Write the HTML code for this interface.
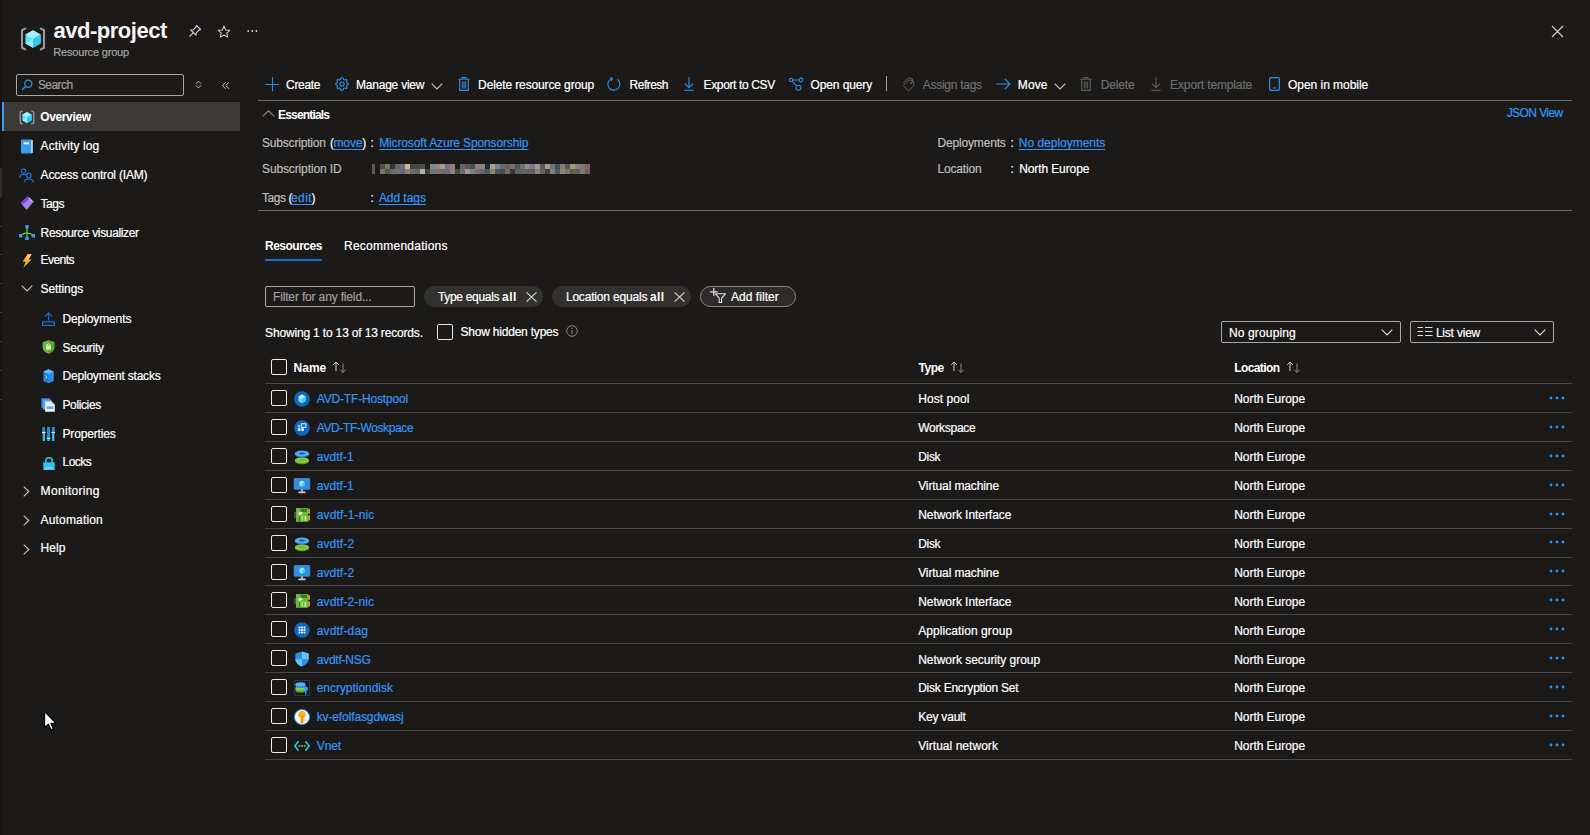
<!DOCTYPE html>
<html><head><meta charset="utf-8"><title>avd-project - Resource group</title>
<style>
html,body{margin:0;padding:0;}
body{width:1590px;height:835px;overflow:hidden;background:#1b1a19;position:relative;font-family:"Liberation Sans", sans-serif;}
.t{position:absolute;white-space:pre;}
.b{position:absolute;}
.i{position:absolute;overflow:visible;}
</style></head><body>
<svg class="i" style="left:19.5px;top:26.5px;width:26px;height:24px" viewBox="0 0 26 24"><path d="M5.2 1.6 L2 3.3 V20.7 L5.2 22.4" fill="none" stroke="#9a9896" stroke-width="2.1" stroke-linecap="round" stroke-linejoin="round"/>
<path d="M20.8 1.6 L24 3.3 V20.7 L20.8 22.4" fill="none" stroke="#9a9896" stroke-width="2.1" stroke-linecap="round" stroke-linejoin="round"/>
<path d="M13 3.2 L20.6 7.6 V16.4 L13 20.8 L5.4 16.4 V7.6 Z" fill="#50e6ff"/>
<path d="M13 3.2 L20.6 7.6 L13 12 L5.4 7.6 Z" fill="#a0eeff"/>
<path d="M13 12 L20.6 7.6 V16.4 L13 20.8 Z" fill="#36c6ea"/>
<path d="M5.4 16.4 L13 12 L13 20.8 Z" fill="#9eeaff"/></svg>
<div class="t" style="left:53.60px;top:20px;font-size:22px;line-height:22px;color:#f6f5f4;letter-spacing:-0.494px;font-weight:700">avd-project</div>
<div class="t" style="left:53.30px;top:47px;font-size:11px;line-height:11px;color:#a8a6a4;letter-spacing:-0.189px;-webkit-text-stroke:0.2px currentColor">Resource group</div>
<svg class="i" style="left:188px;top:24px;width:14px;height:14px" viewBox="0 0 14 14"><path d="M8.5 1.5 L12.5 5.5 L10.8 6.2 L8.2 8.8 L8 11.2 L2.8 6 L5.2 5.8 L7.8 3.2 Z" fill="none" stroke="#d6d4d2" stroke-width="1.1" stroke-linejoin="round"/><path d="M5.2 8.8 L1.5 12.5" stroke="#d6d4d2" stroke-width="1.1"/></svg>
<svg class="i" style="left:216.5px;top:24.5px;width:14px;height:14px" viewBox="0 0 15 15"><path d="M7.5 1.2 L9.3 5.3 L13.8 5.7 L10.4 8.6 L11.4 13 L7.5 10.7 L3.6 13 L4.6 8.6 L1.2 5.7 L5.7 5.3 Z" fill="none" stroke="#d6d4d2" stroke-width="1.1" stroke-linejoin="round"/></svg>
<svg class="i" style="left:246px;top:29.4px;width:12px;height:4px" viewBox="0 0 12 4"><circle cx="2.2" cy="2" r=".9" fill="#d8d6d4"/><circle cx="6.3" cy="2" r=".9" fill="#d8d6d4"/><circle cx="10.4" cy="2" r=".9" fill="#d8d6d4"/></svg>
<svg class="i" style="left:1551px;top:25px;width:13px;height:13px" viewBox="0 0 13 13"><path d="M1 1 L12 12 M12 1 L1 12" stroke="#d0cecc" stroke-width="1.2"/></svg>
<div class="b" style="left:0px;top:0px;width:2px;height:835px;background:#141312"></div>
<div class="b" style="left:0px;top:168px;width:2px;height:30px;background:#2e2d2c"></div>
<div class="b" style="left:0px;top:226px;width:2px;height:1px;background:#3a3938"></div>
<div class="b" style="left:0px;top:254px;width:2px;height:1px;background:#3a3938"></div>
<div class="b" style="left:0px;top:283px;width:2px;height:1px;background:#3a3938"></div>
<div class="b" style="left:0px;top:312px;width:2px;height:1px;background:#3a3938"></div>
<div class="b" style="left:0px;top:341px;width:2px;height:1px;background:#3a3938"></div>
<div class="b" style="left:0px;top:370px;width:2px;height:1px;background:#3a3938"></div>
<div class="b" style="left:0px;top:399px;width:2px;height:1px;background:#3a3938"></div>
<div class="b" style="left:16px;top:74px;width:168px;height:22px;border:1px solid #a9a7a5;box-sizing:border-box;border-radius:2px"></div>
<svg class="i" style="left:21px;top:79px;width:12px;height:12px" viewBox="0 0 12 12"><circle cx="7.3" cy="4.7" r="3.6" fill="none" stroke="#3a94e0" stroke-width="1.2"/><path d="M4.7 7.3 L1 11" stroke="#3a94e0" stroke-width="1.3"/></svg>
<div class="t" style="left:37.90px;top:79px;font-size:12px;line-height:12px;color:#a19f9d;letter-spacing:-0.546px;-webkit-text-stroke:0.2px currentColor">Search</div>
<svg class="i" style="left:194px;top:79px;width:9px;height:10px" viewBox="0 0 9 10"><path d="M2 4.7 L4.5 2.2 L7 4.7 M2 6.4 L4.5 8.9 L7 6.4" fill="none" stroke="#c8c6c4" stroke-width="1"/></svg>
<svg class="i" style="left:221px;top:81px;width:10px;height:9px" viewBox="0 0 10 9"><path d="M4.6 1.3 L1.3 4.5 L4.6 7.7 M8 1.3 L4.7 4.5 L8 7.7" fill="none" stroke="#c8c6c4" stroke-width="1"/></svg>
<div class="b" style="left:2px;top:102px;width:238px;height:29px;background:#3b3a39"></div>
<div class="b" style="left:2px;top:102px;width:2px;height:29px;background:#3b9af5"></div>
<div class="t" style="left:40.20px;top:111px;font-size:12px;line-height:12px;color:#ffffff;letter-spacing:-0.354px;font-weight:700">Overview</div>
<div class="t" style="left:40.60px;top:140px;font-size:12px;line-height:12px;color:#ffffff;letter-spacing:0.113px;-webkit-text-stroke:0.2px currentColor">Activity log</div>
<div class="t" style="left:40.60px;top:169px;font-size:12px;line-height:12px;color:#ffffff;letter-spacing:-0.200px;-webkit-text-stroke:0.2px currentColor">Access control (IAM)</div>
<div class="t" style="left:40.60px;top:198px;font-size:12px;line-height:12px;color:#ffffff;letter-spacing:-0.486px;-webkit-text-stroke:0.2px currentColor">Tags</div>
<div class="t" style="left:40.60px;top:227px;font-size:12px;line-height:12px;color:#ffffff;letter-spacing:-0.345px;-webkit-text-stroke:0.2px currentColor">Resource visualizer</div>
<div class="t" style="left:40.60px;top:254px;font-size:12px;line-height:12px;color:#ffffff;letter-spacing:-0.558px;-webkit-text-stroke:0.2px currentColor">Events</div>
<div class="t" style="left:40.60px;top:283px;font-size:12px;line-height:12px;color:#ffffff;letter-spacing:-0.108px;-webkit-text-stroke:0.2px currentColor">Settings</div>
<div class="t" style="left:62.50px;top:313px;font-size:12px;line-height:12px;color:#ffffff;letter-spacing:-0.113px;-webkit-text-stroke:0.2px currentColor">Deployments</div>
<div class="t" style="left:62.50px;top:342px;font-size:12px;line-height:12px;color:#ffffff;letter-spacing:-0.266px;-webkit-text-stroke:0.2px currentColor">Security</div>
<div class="t" style="left:62.50px;top:370px;font-size:12px;line-height:12px;color:#ffffff;letter-spacing:-0.198px;-webkit-text-stroke:0.2px currentColor">Deployment stacks</div>
<div class="t" style="left:62.50px;top:399px;font-size:12px;line-height:12px;color:#ffffff;letter-spacing:-0.380px;-webkit-text-stroke:0.2px currentColor">Policies</div>
<div class="t" style="left:62.50px;top:428px;font-size:12px;line-height:12px;color:#ffffff;letter-spacing:-0.156px;-webkit-text-stroke:0.2px currentColor">Properties</div>
<div class="t" style="left:62.50px;top:456px;font-size:12px;line-height:12px;color:#ffffff;letter-spacing:-0.540px;-webkit-text-stroke:0.2px currentColor">Locks</div>
<div class="t" style="left:40.60px;top:485px;font-size:12px;line-height:12px;color:#ffffff;letter-spacing:0.319px;-webkit-text-stroke:0.2px currentColor">Monitoring</div>
<div class="t" style="left:40.60px;top:514px;font-size:12px;line-height:12px;color:#ffffff;letter-spacing:0.166px;-webkit-text-stroke:0.2px currentColor">Automation</div>
<div class="t" style="left:40.60px;top:542px;font-size:12px;line-height:12px;color:#ffffff;letter-spacing:0.071px;-webkit-text-stroke:0.2px currentColor">Help</div>
<svg class="i" style="left:19px;top:110px;width:16px;height:15px" viewBox="0 0 26 24"><path d="M5.2 1.6 L2 3.3 V20.7 L5.2 22.4" fill="none" stroke="#9a9896" stroke-width="2.1" stroke-linecap="round" stroke-linejoin="round"/>
<path d="M20.8 1.6 L24 3.3 V20.7 L20.8 22.4" fill="none" stroke="#9a9896" stroke-width="2.1" stroke-linecap="round" stroke-linejoin="round"/>
<path d="M13 3.2 L20.6 7.6 V16.4 L13 20.8 L5.4 16.4 V7.6 Z" fill="#50e6ff"/>
<path d="M13 3.2 L20.6 7.6 L13 12 L5.4 7.6 Z" fill="#a0eeff"/>
<path d="M13 12 L20.6 7.6 V16.4 L13 20.8 Z" fill="#36c6ea"/>
<path d="M5.4 16.4 L13 12 L13 20.8 Z" fill="#9eeaff"/></svg>
<svg class="i" style="left:20px;top:139px;width:14px;height:15px" viewBox="0 0 14 15"><rect x="1" y="0.5" width="11.5" height="14" rx="1.2" fill="#3c9be8"/><rect x="11" y="1" width="1.8" height="13" fill="#a5d4f7"/><rect x="3.5" y="3.5" width="5.5" height="1.8" fill="#fff"/></svg>
<svg class="i" style="left:19px;top:168px;width:16px;height:15px" viewBox="0 0 16 15"><circle cx="4.5" cy="3" r="2.2" fill="none" stroke="#1f6fd6" stroke-width="1.2"/><path d="M0.8 10 C1 7 3 6.2 4.5 6.2 C6 6.2 7.5 7 8 8" fill="none" stroke="#1f6fd6" stroke-width="1.2"/><circle cx="9.8" cy="7.6" r="2.4" fill="none" stroke="#1f6fd6" stroke-width="1.2"/><path d="M5.3 14.5 C5.6 11.6 7.6 10.8 9.8 10.8 C12 10.8 14 11.6 14.3 14.5" fill="none" stroke="#1f6fd6" stroke-width="1.2"/></svg>
<svg class="i" style="left:20px;top:196px;width:15px;height:14px" viewBox="0 0 15 14"><path d="M0.8 7 L7.8 0.2 L13.8 5.4 L6.6 13.9 Z" fill="#a67fe0"/><path d="M0.8 7 L7.8 0.2 L9.8 2 L2.8 8.8 Z" fill="#7a3fe6"/><circle cx="9.4" cy="2.4" r=".7" fill="#f0e8ff"/><circle cx="11" cy="4.2" r=".7" fill="#e8dcfa"/></svg>
<svg class="i" style="left:19px;top:225px;width:16px;height:15px" viewBox="0 0 16 15"><path d="M8 2 V12 M1.8 10.5 C4 8.5 6 8 8 8 C10 8 12 8.5 14.2 10.5" fill="none" stroke="#6fbf3e" stroke-width="1.3"/><rect x="6.3" y="0" width="3.4" height="3.4" fill="#3c9be8"/><rect x="0" y="9" width="3.4" height="3.4" fill="#3c9be8"/><rect x="12.6" y="9" width="3.4" height="3.4" fill="#3c9be8"/><rect x="6.3" y="11.6" width="3.4" height="3.4" fill="#3c9be8"/></svg>
<svg class="i" style="left:22px;top:254px;width:10px;height:14px" viewBox="0 0 10 14"><path d="M5.5 0.3 L9.5 0.3 L6.6 5.5 L9.6 5.5 L1.3 13.8 L3.8 7.8 L0.6 7.8 Z" fill="#fcb51b"/><path d="M5.5 0.3 L9.5 0.3 L6.6 5.5 L4 5.5 Z" fill="#fdd061"/></svg>
<svg class="i" style="left:21px;top:285px;width:12px;height:7px" viewBox="0 0 12 7"><path d="M0.7 0.7 L6 6 L11.3 0.7" fill="none" stroke="#c8c6c4" stroke-width="1.1"/></svg>
<svg class="i" style="left:42px;top:312px;width:13px;height:14px" viewBox="0 0 13 14"><path d="M6.5 1 V8.5 M2.8 4.6 L6.5 1 L10.2 4.6" fill="none" stroke="#1a6fd8" stroke-width="1.2"/><rect x="0.6" y="9.9" width="11.8" height="3.5" fill="none" stroke="#1a6fd8" stroke-width="1.2"/></svg>
<svg class="i" style="left:42px;top:340px;width:13px;height:14px" viewBox="0 0 13 14"><path d="M6.5 0.2 L12.4 2.2 V7.5 C12.4 10.8 9 12.8 6.5 13.8 C4 12.8 0.6 10.8 0.6 7.5 V2.2 Z" fill="#6bb52f"/><path d="M6.5 0.2 L12.4 2.2 V7.5 C12.4 10.8 9 12.8 6.5 13.8 Z" fill="#5ba324"/><rect x="4" y="5.8" width="5" height="3.8" rx=".4" fill="#f2f2f2"/><path d="M4.9 5.9 V4.8 C4.9 3.6 8.1 3.6 8.1 4.8 V5.9" fill="none" stroke="#f2f2f2" stroke-width="1"/></svg>
<svg class="i" style="left:43px;top:369px;width:11px;height:14px" viewBox="0 0 11 14"><path d="M5.5 0.3 L10.6 2.6 V11.2 L5.5 13.7 L0.4 11.2 V2.6 Z" fill="#1f7ee0"/><path d="M5.5 5 L10.6 2.6 V11.2 L5.5 13.7 Z" fill="#2a8ff0"/><path d="M5.5 0.3 L10.6 2.6 L5.5 5 L0.4 2.6 Z" fill="#6ab8f5"/><path d="M0.4 11.2 L5.5 13.7 L10.6 11.2 L10.6 12 L5.5 14 L0.4 12 Z" fill="#4ed0f5"/><path d="M2.5 6.5 L4 8 L2.5 9.5" fill="none" stroke="#d8eefc" stroke-width=".7"/></svg>
<svg class="i" style="left:41px;top:398px;width:15px;height:14px" viewBox="0 0 15 14"><rect x="0.4" y="0.3" width="8.5" height="10" fill="#3b8de8"/><rect x="2.2" y="1.8" width="8.5" height="10" fill="#5ba5f0"/><path d="M4.2 3.6 H10.5 L13.8 6.5 V13.7 H4.2 Z" fill="#eef5fd"/><path d="M10.5 3.6 V6.5 H13.8" fill="#a9cff5"/><rect x="5.6" y="8.3" width="6.8" height="2.8" fill="#6aa7e8"/></svg>
<svg class="i" style="left:42px;top:427px;width:13px;height:14px" viewBox="0 0 13 14"><rect x="0.6" y="0" width="2.4" height="14" fill="#2fb6ef"/><rect x="5.3" y="0" width="2.4" height="14" fill="#2fb6ef"/><rect x="10" y="0" width="2.4" height="14" fill="#2fb6ef"/><rect x="0" y="4.8" width="3.6" height="1.2" fill="#e9f7fd"/><rect x="4.7" y="10.6" width="3.6" height="1.2" fill="#e9f7fd"/><rect x="9.4" y="4.8" width="3.6" height="1.2" fill="#e9f7fd"/><rect x="0.6" y="0" width="2.4" height="4.8" fill="#1f8fd6"/><rect x="5.3" y="0" width="2.4" height="10.6" fill="#1f8fd6"/><rect x="10" y="0" width="2.4" height="4.8" fill="#1f8fd6"/></svg>
<svg class="i" style="left:43px;top:456px;width:12px;height:14px" viewBox="0 0 12 14"><path d="M2.8 6.5 V4.3 C2.8 0.9 9.2 0.9 9.2 4.3 V6.5" fill="none" stroke="#30c3e8" stroke-width="1.5"/><rect x="0.3" y="6.3" width="11.4" height="7.5" fill="#34c5ec"/><path d="M0.3 13.8 L6 9.5 L11.7 13.8 Z" fill="#61d6f5"/><path d="M0.3 6.3 L6 10 L11.7 6.3 L11.7 7 L6 10.8 L0.3 7 Z" fill="#1fa6d6" opacity=".6"/></svg>
<svg class="i" style="left:23px;top:486.0px;width:7px;height:11px" viewBox="0 0 7 11"><path d="M0.7 0.7 L5.8 5.5 L0.7 10.3" fill="none" stroke="#c8c6c4" stroke-width="1.1"/></svg>
<svg class="i" style="left:23px;top:514.8px;width:7px;height:11px" viewBox="0 0 7 11"><path d="M0.7 0.7 L5.8 5.5 L0.7 10.3" fill="none" stroke="#c8c6c4" stroke-width="1.1"/></svg>
<svg class="i" style="left:23px;top:543.6px;width:7px;height:11px" viewBox="0 0 7 11"><path d="M0.7 0.7 L5.8 5.5 L0.7 10.3" fill="none" stroke="#c8c6c4" stroke-width="1.1"/></svg>
<svg class="i" style="left:265px;top:77px;width:15px;height:15px" viewBox="0 0 15 15"><path d="M7.5 0.3 V14.2 M0.3 7.5 H14.2" stroke="#2a8ce2" stroke-width="1.1"/></svg>
<div class="t" style="left:286.10px;top:79px;font-size:12px;line-height:12px;color:#ffffff;letter-spacing:-0.326px;-webkit-text-stroke:0.2px currentColor">Create</div>
<svg class="i" style="left:335px;top:77px;width:14px;height:14px" viewBox="0 0 14 14"><path d="M7 0.8 L8.2 0.9 L8.6 2.5 L9.8 3.1 L11.3 2.3 L12.2 3.3 L11.5 4.8 L12 6 L13.3 6.4 V7.6 L12 8 L11.5 9.2 L12.2 10.7 L11.3 11.7 L9.8 10.9 L8.6 11.5 L8.2 13.1 H5.8 L5.4 11.5 L4.2 10.9 L2.7 11.7 L1.8 10.7 L2.5 9.2 L2 8 L0.7 7.6 V6.4 L2 6 L2.5 4.8 L1.8 3.3 L2.7 2.3 L4.2 3.1 L5.4 2.5 L5.8 0.9 Z" fill="none" stroke="#2f8fe2" stroke-width="1.05" stroke-linejoin="round"/><circle cx="7" cy="7" r="2.1" fill="none" stroke="#2f8fe2" stroke-width="1.05"/></svg>
<div class="t" style="left:356.00px;top:79px;font-size:12px;line-height:12px;color:#ffffff;letter-spacing:-0.222px;-webkit-text-stroke:0.2px currentColor">Manage view</div>
<svg class="i" style="left:431px;top:83px;width:12px;height:7px" viewBox="0 0 12 7"><path d="M0.7 0.7 L6 6 L11.3 0.7" fill="none" stroke="#c8c6c4" stroke-width="1.1"/></svg>
<svg class="i" style="left:458px;top:77px;width:12px;height:14px" viewBox="0 0 12 14"><path d="M0.3 2.2 H11.7 M4 2.2 V0.6 H8 V2.2" fill="none" stroke="#2f8fe2" stroke-width="1.1"/><path d="M1.7 2.2 V13.4 H10.3 V2.2" fill="none" stroke="#2f8fe2" stroke-width="1.1"/><path d="M4.3 4.5 V11.5 M6 4.5 V11.5 M7.7 4.5 V11.5" stroke="#2f8fe2" stroke-width="1"/></svg>
<div class="t" style="left:478.10px;top:79px;font-size:12px;line-height:12px;color:#ffffff;letter-spacing:-0.127px;-webkit-text-stroke:0.2px currentColor">Delete resource group</div>
<svg class="i" style="left:607px;top:77px;width:15px;height:14px" viewBox="0 0 15 14"><path d="M10.2 2.2 A6 6 0 1 1 4.3 1.7" fill="none" stroke="#2f8fe2" stroke-width="1.1"/><path d="M3.2 0.2 L5.6 1.6 L3.8 3.9" fill="none" stroke="#2f8fe2" stroke-width="1.1"/></svg>
<div class="t" style="left:629.60px;top:79px;font-size:12px;line-height:12px;color:#ffffff;letter-spacing:-0.522px;-webkit-text-stroke:0.2px currentColor">Refresh</div>
<svg class="i" style="left:684px;top:77px;width:10px;height:14px" viewBox="0 0 10 14"><path d="M5 0.3 V10.5 M1 6.6 L5 10.6 L9 6.6" fill="none" stroke="#2f8fe2" stroke-width="1.1"/><path d="M0.3 13.3 H9.7" stroke="#2f8fe2" stroke-width="1.1"/></svg>
<div class="t" style="left:703.60px;top:79px;font-size:12px;line-height:12px;color:#ffffff;letter-spacing:-0.369px;-webkit-text-stroke:0.2px currentColor">Export to CSV</div>
<svg class="i" style="left:789px;top:77px;width:14px;height:14px" viewBox="0 0 14 14"><circle cx="2" cy="2.9" r="1.6" fill="none" stroke="#2f8fe2" stroke-width="1.05"/><circle cx="12" cy="3" r="1.9" fill="none" stroke="#2f8fe2" stroke-width="1.05"/><circle cx="9.5" cy="10.8" r="2.5" fill="none" stroke="#2f8fe2" stroke-width="1.05"/><path d="M3.6 2.95 H10.1 M3.1 4.1 L7.8 9" stroke="#2f8fe2" stroke-width="1.05"/></svg>
<div class="t" style="left:810.40px;top:79px;font-size:12px;line-height:12px;color:#ffffff;letter-spacing:-0.091px;-webkit-text-stroke:0.2px currentColor">Open query</div>
<div class="b" style="left:886px;top:76px;width:1px;height:15px;background:#a19f9d"></div>
<svg class="i" style="left:902px;top:77px;width:13px;height:15px" viewBox="0 0 13 15"><path d="M1.2 6.2 L6.3 0.8 L10.2 1.6 L10.8 5" fill="none" stroke="#5f5e5c" stroke-width="1" stroke-linejoin="round"/><path d="M1.2 8.6 L7.2 2.8 L11.4 3.8 L12 8.2 L6.6 13.9 Z" fill="none" stroke="#5f5e5c" stroke-width="1" stroke-linejoin="round"/><circle cx="9.3" cy="6" r=".9" fill="none" stroke="#5f5e5c" stroke-width=".9"/></svg>
<div class="t" style="left:922.70px;top:79px;font-size:12px;line-height:12px;color:#6e6d6b;letter-spacing:-0.265px;-webkit-text-stroke:0.2px currentColor">Assign tags</div>
<svg class="i" style="left:996px;top:78px;width:15px;height:12px" viewBox="0 0 15 12"><path d="M0.3 6 H14 M8.8 0.8 L14 6 L8.8 11.2" fill="none" stroke="#2f8fe2" stroke-width="1.2"/></svg>
<div class="t" style="left:1017.80px;top:79px;font-size:12px;line-height:12px;color:#ffffff;letter-spacing:0.119px;-webkit-text-stroke:0.2px currentColor">Move</div>
<svg class="i" style="left:1054px;top:83px;width:12px;height:7px" viewBox="0 0 12 7"><path d="M0.7 0.7 L6 6 L11.3 0.7" fill="none" stroke="#c8c6c4" stroke-width="1.1"/></svg>
<svg class="i" style="left:1080px;top:77px;width:12px;height:14px" viewBox="0 0 12 14"><path d="M0.3 2.2 H11.7 M4 2.2 V0.6 H8 V2.2" fill="none" stroke="#5f5e5c" stroke-width="1.1"/><path d="M1.7 2.2 V13.4 H10.3 V2.2" fill="none" stroke="#5f5e5c" stroke-width="1.1"/><path d="M4.3 4.5 V11.5 M6 4.5 V11.5 M7.7 4.5 V11.5" stroke="#5f5e5c" stroke-width="1"/></svg>
<div class="t" style="left:1100.70px;top:79px;font-size:12px;line-height:12px;color:#6e6d6b;letter-spacing:-0.158px;-webkit-text-stroke:0.2px currentColor">Delete</div>
<svg class="i" style="left:1151px;top:77px;width:10px;height:14px" viewBox="0 0 10 14"><path d="M5 0.3 V10.5 M1 6.6 L5 10.6 L9 6.6" fill="none" stroke="#5f5e5c" stroke-width="1.1"/><path d="M0.3 13.3 H9.7" stroke="#5f5e5c" stroke-width="1.1"/></svg>
<div class="t" style="left:1170.10px;top:79px;font-size:12px;line-height:12px;color:#6e6d6b;letter-spacing:-0.132px;-webkit-text-stroke:0.2px currentColor">Export template</div>
<svg class="i" style="left:1269px;top:77px;width:11px;height:14px" viewBox="0 0 11 14"><rect x="0.6" y="0.6" width="9.8" height="12.8" rx="1.3" fill="none" stroke="#2f8fe2" stroke-width="1.2"/><path d="M4 11 H7" stroke="#2f8fe2" stroke-width="1"/></svg>
<div class="t" style="left:1288.00px;top:79px;font-size:12px;line-height:12px;color:#ffffff;letter-spacing:-0.032px;-webkit-text-stroke:0.2px currentColor">Open in mobile</div>
<div class="b" style="left:258px;top:100px;width:1314px;height:1px;background:#696867"></div>
<svg class="i" style="left:262px;top:110px;width:13px;height:7px" viewBox="0 0 13 7"><path d="M0.7 6.3 L6.5 0.8 L12.3 6.3" fill="none" stroke="#8a8886" stroke-width="1.1"/></svg>
<div class="t" style="left:278.10px;top:109px;font-size:12px;line-height:12px;color:#ffffff;letter-spacing:-0.831px;font-weight:700">Essentials</div>
<div class="t" style="left:1506.70px;top:107px;font-size:12px;line-height:12px;color:#3794f5;letter-spacing:-0.580px;-webkit-text-stroke:0.2px currentColor">JSON View</div>
<div class="t" style="left:262.00px;top:137px;font-size:12px;line-height:12px;color:#bebcba;letter-spacing:-0.195px;-webkit-text-stroke:0.2px currentColor">Subscription</div>
<div class="t" style="left:330.00px;top:137px;font-size:12px;line-height:12px;color:#ffffff;-webkit-text-stroke:0.2px currentColor">(</div>
<div class="t" style="left:333.40px;top:137px;font-size:12px;line-height:12px;color:#3794f5;letter-spacing:-0.015px;-webkit-text-stroke:0.2px currentColor;text-decoration:underline;text-underline-offset:2px">move</div>
<div class="t" style="left:362.20px;top:137px;font-size:12px;line-height:12px;color:#ffffff;-webkit-text-stroke:0.2px currentColor">)</div>
<div class="t" style="left:370.60px;top:137px;font-size:12px;line-height:12px;color:#ffffff;-webkit-text-stroke:0.2px currentColor">:</div>
<div class="t" style="left:379.20px;top:137px;font-size:12px;line-height:12px;color:#3794f5;letter-spacing:-0.133px;-webkit-text-stroke:0.2px currentColor;text-decoration:underline;text-underline-offset:2px">Microsoft Azure Sponsorship</div>
<div class="t" style="left:262.00px;top:163px;font-size:12px;line-height:12px;color:#bebcba;letter-spacing:-0.127px;-webkit-text-stroke:0.2px currentColor">Subscription ID</div>
<div class="b" style="left:372px;top:164px;width:3px;height:10px;background:#5a5a48"></div>
<svg class="i" style="left:380px;top:164px;width:210px;height:10px" viewBox="0 0 210 10"><rect x="0" y="0" width="5" height="5" fill="#4e4e4c"/><rect x="0" y="5" width="5" height="5" fill="#767270"/><rect x="5" y="0" width="5" height="5" fill="#77776a"/><rect x="5" y="5" width="5" height="5" fill="#545a40"/><rect x="10" y="0" width="5" height="5" fill="#333538"/><rect x="10" y="5" width="5" height="5" fill="#6a6a78"/><rect x="15" y="0" width="5" height="5" fill="#5e6668"/><rect x="15" y="5" width="5" height="5" fill="#6e7468"/><rect x="20" y="0" width="5" height="5" fill="#6c6e78"/><rect x="20" y="5" width="5" height="5" fill="#62667e"/><rect x="25" y="0" width="5" height="5" fill="#c8b898"/><rect x="25" y="5" width="5" height="5" fill="#8e7e6e"/><rect x="30" y="0" width="5" height="5" fill="#4a4244"/><rect x="30" y="5" width="5" height="5" fill="#5e6e72"/><rect x="35" y="0" width="5" height="5" fill="#4c4a46"/><rect x="35" y="5" width="5" height="5" fill="#6a6262"/><rect x="40" y="0" width="5" height="5" fill="#4a504c"/><rect x="40" y="5" width="5" height="5" fill="#a8b0a4"/><rect x="45" y="0" width="5" height="5" fill="#1b1a19"/><rect x="45" y="5" width="5" height="5" fill="#4e3a38"/><rect x="50" y="0" width="5" height="5" fill="#7a8898"/><rect x="50" y="5" width="5" height="5" fill="#6a7880"/><rect x="55" y="0" width="5" height="5" fill="#9a8688"/><rect x="55" y="5" width="5" height="5" fill="#7e7070"/><rect x="60" y="0" width="5" height="5" fill="#98a090"/><rect x="60" y="5" width="5" height="5" fill="#6a6a66"/><rect x="65" y="0" width="5" height="5" fill="#7a6e8a"/><rect x="65" y="5" width="5" height="5" fill="#74688a"/><rect x="70" y="0" width="5" height="5" fill="#8a8078"/><rect x="70" y="5" width="5" height="5" fill="#8a8678"/><rect x="75" y="0" width="5" height="5" fill="#221e18"/><rect x="75" y="5" width="5" height="5" fill="#4a4a3e"/><rect x="80" y="0" width="5" height="5" fill="#5a6878"/><rect x="80" y="5" width="5" height="5" fill="#6a6a78"/><rect x="85" y="0" width="5" height="5" fill="#5a5a4a"/><rect x="85" y="5" width="5" height="5" fill="#9a9a8e"/><rect x="90" y="0" width="5" height="5" fill="#4a5050"/><rect x="90" y="5" width="5" height="5" fill="#7a847a"/><rect x="95" y="0" width="5" height="5" fill="#8a7e76"/><rect x="95" y="5" width="5" height="5" fill="#7e7066"/><rect x="100" y="0" width="5" height="5" fill="#8a8680"/><rect x="100" y="5" width="5" height="5" fill="#686664"/><rect x="105" y="0" width="5" height="5" fill="#222a34"/><rect x="105" y="5" width="5" height="5" fill="#4e5a66"/><rect x="110" y="0" width="5" height="5" fill="#a89e9a"/><rect x="110" y="5" width="5" height="5" fill="#8e806a"/><rect x="115" y="0" width="5" height="5" fill="#7a8088"/><rect x="115" y="5" width="5" height="5" fill="#545450"/><rect x="120" y="0" width="5" height="5" fill="#646c76"/><rect x="120" y="5" width="5" height="5" fill="#444c56"/><rect x="125" y="0" width="5" height="5" fill="#6e5e54"/><rect x="125" y="5" width="5" height="5" fill="#686e66"/><rect x="130" y="0" width="5" height="5" fill="#7a6e6a"/><rect x="130" y="5" width="5" height="5" fill="#3e3428"/><rect x="135" y="0" width="5" height="5" fill="#4a5a5e"/><rect x="135" y="5" width="5" height="5" fill="#566466"/><rect x="140" y="0" width="5" height="5" fill="#7e6a6e"/><rect x="140" y="5" width="5" height="5" fill="#6a5e5e"/><rect x="145" y="0" width="5" height="5" fill="#849496"/><rect x="145" y="5" width="5" height="5" fill="#5a6068"/><rect x="150" y="0" width="5" height="5" fill="#86788a"/><rect x="150" y="5" width="5" height="5" fill="#6a5a5e"/><rect x="155" y="0" width="5" height="5" fill="#9a9a98"/><rect x="155" y="5" width="5" height="5" fill="#7e8676"/><rect x="160" y="0" width="5" height="5" fill="#58585e"/><rect x="160" y="5" width="5" height="5" fill="#6a5e4e"/><rect x="165" y="0" width="5" height="5" fill="#a49e88"/><rect x="165" y="5" width="5" height="5" fill="#3a3e46"/><rect x="170" y="0" width="5" height="5" fill="#7a6e76"/><rect x="170" y="5" width="5" height="5" fill="#7e8088"/><rect x="175" y="0" width="5" height="5" fill="#3e5658"/><rect x="175" y="5" width="5" height="5" fill="#545858"/><rect x="180" y="0" width="5" height="5" fill="#8a7a6a"/><rect x="180" y="5" width="5" height="5" fill="#8a8474"/><rect x="185" y="0" width="5" height="5" fill="#4e5670"/><rect x="185" y="5" width="5" height="5" fill="#7e7466"/><rect x="190" y="0" width="5" height="5" fill="#a69a76"/><rect x="190" y="5" width="5" height="5" fill="#5e5e40"/><rect x="195" y="0" width="5" height="5" fill="#86808a"/><rect x="195" y="5" width="5" height="5" fill="#5a5e6a"/><rect x="200" y="0" width="5" height="5" fill="#7e7a66"/><rect x="200" y="5" width="5" height="5" fill="#7e7e66"/><rect x="205" y="0" width="5" height="5" fill="#7e6270"/><rect x="205" y="5" width="5" height="5" fill="#6e5a62"/></svg>
<div class="t" style="left:262.00px;top:192px;font-size:12px;line-height:12px;color:#bebcba;letter-spacing:-0.486px;-webkit-text-stroke:0.2px currentColor">Tags</div>
<div class="t" style="left:288.60px;top:192px;font-size:12px;line-height:12px;color:#ffffff;-webkit-text-stroke:0.2px currentColor">(</div>
<div class="t" style="left:291.10px;top:192px;font-size:12px;line-height:12px;color:#3794f5;letter-spacing:0.347px;-webkit-text-stroke:0.2px currentColor;text-decoration:underline;text-underline-offset:2px">edit</div>
<div class="t" style="left:311.40px;top:192px;font-size:12px;line-height:12px;color:#ffffff;-webkit-text-stroke:0.2px currentColor">)</div>
<div class="t" style="left:370.60px;top:192px;font-size:12px;line-height:12px;color:#ffffff;-webkit-text-stroke:0.2px currentColor">:</div>
<div class="t" style="left:378.90px;top:192px;font-size:12px;line-height:12px;color:#3794f5;letter-spacing:-0.054px;-webkit-text-stroke:0.2px currentColor;text-decoration:underline;text-underline-offset:2px">Add tags</div>
<div class="t" style="left:937.50px;top:137px;font-size:12px;line-height:12px;color:#bebcba;letter-spacing:-0.173px;-webkit-text-stroke:0.2px currentColor">Deployments</div>
<div class="t" style="left:1010.60px;top:137px;font-size:12px;line-height:12px;color:#ffffff;-webkit-text-stroke:0.2px currentColor">:</div>
<div class="t" style="left:1018.80px;top:137px;font-size:12px;line-height:12px;color:#3794f5;letter-spacing:-0.017px;-webkit-text-stroke:0.2px currentColor;text-decoration:underline;text-underline-offset:2px">No deployments</div>
<div class="t" style="left:937.50px;top:163px;font-size:12px;line-height:12px;color:#bebcba;letter-spacing:-0.168px;-webkit-text-stroke:0.2px currentColor">Location</div>
<div class="t" style="left:1010.60px;top:163px;font-size:12px;line-height:12px;color:#ffffff;-webkit-text-stroke:0.2px currentColor">:</div>
<div class="t" style="left:1019.20px;top:163px;font-size:12px;line-height:12px;color:#ffffff;letter-spacing:-0.107px;-webkit-text-stroke:0.2px currentColor">North Europe</div>
<div class="b" style="left:258px;top:210px;width:1314px;height:1px;background:#696867"></div>
<div class="t" style="left:265.00px;top:240px;font-size:12px;line-height:12px;color:#ffffff;letter-spacing:-0.497px;font-weight:700">Resources</div>
<div class="t" style="left:344.00px;top:240px;font-size:12px;line-height:12px;color:#ffffff;letter-spacing:0.246px;-webkit-text-stroke:0.2px currentColor">Recommendations</div>
<div class="b" style="left:265px;top:259px;width:57px;height:2px;background:#0d75d2;border-radius:1px"></div>
<div class="b" style="left:265px;top:286px;width:150px;height:21px;border:1px solid #a8a6a4;box-sizing:border-box;border-radius:2px"></div>
<div class="t" style="left:273.00px;top:291px;font-size:12px;line-height:12px;color:#a19f9d;letter-spacing:-0.157px;-webkit-text-stroke:0.2px currentColor">Filter for any field...</div>
<div class="b" style="left:424px;top:286px;width:119px;height:21px;background:#323130;border-radius:11px"></div>
<div class="t" style="left:437.90px;top:291px;font-size:12px;line-height:12px;color:#ffffff;letter-spacing:-0.312px;-webkit-text-stroke:0.2px currentColor">Type equals</div>
<div class="t" style="left:502.10px;top:291px;font-size:12px;line-height:12px;color:#ffffff;letter-spacing:0.428px;font-weight:700">all</div>
<svg class="i" style="left:526px;top:292px;width:11px;height:10px" viewBox="0 0 11 10"><path d="M0.5 0.3 L10.5 9.7 M10.5 0.3 L0.5 9.7" stroke="#d6d4d2" stroke-width="1.15"/></svg>
<div class="b" style="left:552px;top:286px;width:139px;height:21px;background:#323130;border-radius:11px"></div>
<div class="t" style="left:565.90px;top:291px;font-size:12px;line-height:12px;color:#ffffff;letter-spacing:-0.184px;-webkit-text-stroke:0.2px currentColor">Location equals</div>
<div class="t" style="left:650.00px;top:291px;font-size:12px;line-height:12px;color:#ffffff;letter-spacing:0.378px;font-weight:700">all</div>
<svg class="i" style="left:674px;top:292px;width:11px;height:10px" viewBox="0 0 11 10"><path d="M0.5 0.3 L10.5 9.7 M10.5 0.3 L0.5 9.7" stroke="#d6d4d2" stroke-width="1.15"/></svg>
<div class="b" style="left:700px;top:286px;width:96px;height:21px;border:1px solid #8a8886;background:#2c2b2a;box-sizing:border-box;border-radius:11px"></div>
<svg class="i" style="left:709px;top:288px;width:17px;height:15px" viewBox="0 0 17 15"><path d="M0.8 3.9 H8.8 M4.8 0 V7.8" stroke="#e0dedc" stroke-width="1.3"/><path d="M6.5 5.8 H16.5 L12.6 10.2 V14.5 H10.2 V10.2 Z" fill="none" stroke="#e0dedc" stroke-width="1.1" stroke-linejoin="round"/></svg>
<div class="t" style="left:730.90px;top:291px;font-size:12px;line-height:12px;color:#ffffff;letter-spacing:0.060px;-webkit-text-stroke:0.2px currentColor">Add filter</div>
<div class="t" style="left:265.10px;top:327px;font-size:12px;line-height:12px;color:#ffffff;letter-spacing:-0.168px;-webkit-text-stroke:0.2px currentColor">Showing 1 to 13 of 13 records.</div>
<div class="b" style="left:437px;top:324px;width:16px;height:16px;border:1px solid #e6e4e2;box-sizing:border-box;border-radius:2px"></div>
<div class="t" style="left:460.40px;top:326px;font-size:12px;line-height:12px;color:#ffffff;letter-spacing:-0.200px;-webkit-text-stroke:0.2px currentColor">Show hidden types</div>
<svg class="i" style="left:566px;top:325px;width:12px;height:12px" viewBox="0 0 12 12"><circle cx="6" cy="6" r="5.3" fill="none" stroke="#8a8886" stroke-width="1"/><path d="M6 5 V9" stroke="#8a8886" stroke-width="1"/><circle cx="6" cy="3.3" r=".6" fill="#8a8886"/></svg>
<div class="b" style="left:1221px;top:321px;width:180px;height:22px;border:1px solid #a9a7a5;box-sizing:border-box;border-radius:2px"></div>
<div class="t" style="left:1228.90px;top:327px;font-size:12px;line-height:12px;color:#ffffff;letter-spacing:0.151px;-webkit-text-stroke:0.2px currentColor">No grouping</div>
<svg class="i" style="left:1381px;top:329px;width:12px;height:7px" viewBox="0 0 12 7"><path d="M0.7 0.7 L6 6 L11.3 0.7" fill="none" stroke="#e0dedc" stroke-width="1.1"/></svg>
<div class="b" style="left:1410px;top:321px;width:144px;height:22px;border:1px solid #a9a7a5;box-sizing:border-box;border-radius:2px"></div>
<svg class="i" style="left:1417px;top:327px;width:16px;height:10px" viewBox="0 0 16 10"><path d="M0.5 0.5 H6 M0.5 4.5 H6 M0.5 8.5 H6 M8 0.5 H15.5 M8 4.5 H15.5 M8 8.5 H15.5" stroke="#e0dedc" stroke-width="1"/></svg>
<div class="t" style="left:1435.90px;top:327px;font-size:12px;line-height:12px;color:#ffffff;letter-spacing:-0.202px;-webkit-text-stroke:0.2px currentColor">List view</div>
<svg class="i" style="left:1534px;top:329px;width:12px;height:7px" viewBox="0 0 12 7"><path d="M0.7 0.7 L6 6 L11.3 0.7" fill="none" stroke="#e0dedc" stroke-width="1.1"/></svg>
<div class="b" style="left:271px;top:359px;width:16px;height:16px;border:1.2px solid #eeeceb;box-sizing:border-box;border-radius:2px"></div>
<div class="t" style="left:293.60px;top:362px;font-size:12px;line-height:12px;color:#ffffff;letter-spacing:-0.029px;font-weight:700">Name</div>
<svg class="i" style="left:332px;top:361px;width:15px;height:12px" viewBox="0 0 15 12"><path d="M4 10 V1 M1.2 3.8 L4 1 L6.8 3.8" fill="none" stroke="#d0cecc" stroke-width="1"/><path d="M11 2.5 V11.5 M8.2 8.7 L11 11.5 L13.8 8.7" fill="none" stroke="#8a8886" stroke-width="1"/></svg>
<div class="t" style="left:918.60px;top:362px;font-size:12px;line-height:12px;color:#ffffff;letter-spacing:-0.508px;font-weight:700">Type</div>
<svg class="i" style="left:950px;top:361px;width:15px;height:12px" viewBox="0 0 15 12"><path d="M4 10 V1 M1.2 3.8 L4 1 L6.8 3.8" fill="none" stroke="#d0cecc" stroke-width="1"/><path d="M11 2.5 V11.5 M8.2 8.7 L11 11.5 L13.8 8.7" fill="none" stroke="#8a8886" stroke-width="1"/></svg>
<div class="t" style="left:1234.20px;top:362px;font-size:12px;line-height:12px;color:#ffffff;letter-spacing:-0.586px;font-weight:700">Location</div>
<svg class="i" style="left:1286px;top:361px;width:15px;height:12px" viewBox="0 0 15 12"><path d="M4 10 V1 M1.2 3.8 L4 1 L6.8 3.8" fill="none" stroke="#d0cecc" stroke-width="1"/><path d="M11 2.5 V11.5 M8.2 8.7 L11 11.5 L13.8 8.7" fill="none" stroke="#8a8886" stroke-width="1"/></svg>
<div class="b" style="left:265px;top:383px;width:1307px;height:1px;background:#484644"></div>
<div class="b" style="left:265px;top:412px;width:1307px;height:1px;background:#484644"></div>
<div class="b" style="left:265px;top:441px;width:1307px;height:1px;background:#484644"></div>
<div class="b" style="left:265px;top:470px;width:1307px;height:1px;background:#484644"></div>
<div class="b" style="left:265px;top:499px;width:1307px;height:1px;background:#484644"></div>
<div class="b" style="left:265px;top:528px;width:1307px;height:1px;background:#484644"></div>
<div class="b" style="left:265px;top:557px;width:1307px;height:1px;background:#484644"></div>
<div class="b" style="left:265px;top:585px;width:1307px;height:1px;background:#484644"></div>
<div class="b" style="left:265px;top:614px;width:1307px;height:1px;background:#484644"></div>
<div class="b" style="left:265px;top:643px;width:1307px;height:1px;background:#484644"></div>
<div class="b" style="left:265px;top:672px;width:1307px;height:1px;background:#484644"></div>
<div class="b" style="left:265px;top:701px;width:1307px;height:1px;background:#484644"></div>
<div class="b" style="left:265px;top:730px;width:1307px;height:1px;background:#484644"></div>
<div class="b" style="left:265px;top:759px;width:1307px;height:1px;background:#484644"></div>
<div class="b" style="left:271px;top:390px;width:16px;height:16px;border:1.2px solid #eeeceb;box-sizing:border-box;border-radius:2px"></div>
<svg class="i" style="left:294px;top:391px;width:16px;height:16px" viewBox="0 0 16 16"><circle cx="8" cy="8" r="7.8" fill="#0f66c0"/><path d="M8 3.6 L11.6 5.6 V10.2 L8 12.3 L4.4 10.2 V5.6 Z" fill="#7fdcfb"/><path d="M8 3.6 L11.6 5.6 L8 7.7 L4.4 5.6 Z" fill="#c2f0ff"/><path d="M8 7.7 L11.6 5.6 V10.2 L8 12.3 Z" fill="#50c8f0"/></svg>
<div class="t" style="left:316.70px;top:393px;font-size:12px;line-height:12px;color:#3794f5;letter-spacing:-0.164px;-webkit-text-stroke:0.2px currentColor">AVD-TF-Hostpool</div>
<div class="t" style="left:918.20px;top:393px;font-size:12px;line-height:12px;color:#ffffff;letter-spacing:0.075px;-webkit-text-stroke:0.2px currentColor">Host pool</div>
<div class="t" style="left:1234.20px;top:393px;font-size:12px;line-height:12px;color:#ffffff;letter-spacing:-0.043px;-webkit-text-stroke:0.2px currentColor">North Europe</div>
<svg class="i" style="left:1549px;top:395.8px;width:16px;height:4px" viewBox="0 0 16 4"><circle cx="2" cy="2" r="1.45" fill="#2b90f2"/><circle cx="8" cy="2" r="1.45" fill="#2b90f2"/><circle cx="14" cy="2" r="1.45" fill="#2b90f2"/></svg>
<div class="b" style="left:271px;top:419px;width:16px;height:16px;border:1.2px solid #eeeceb;box-sizing:border-box;border-radius:2px"></div>
<svg class="i" style="left:294px;top:420px;width:16px;height:16px" viewBox="0 0 16 16"><circle cx="8" cy="8" r="7.8" fill="#0f66c0"/><rect x="7.3" y="3.8" width="4.6" height="3.6" fill="none" stroke="#e8f4fd" stroke-width="1"/><rect x="3.8" y="8.3" width="2.6" height="2.6" fill="#e8f4fd"/><rect x="7.3" y="8.3" width="2.6" height="2.6" fill="#e8f4fd"/><rect x="3.8" y="5.2" width="2.2" height="2.2" fill="#9fd0f5"/></svg>
<div class="t" style="left:316.70px;top:422px;font-size:12px;line-height:12px;color:#3794f5;letter-spacing:-0.382px;-webkit-text-stroke:0.2px currentColor">AVD-TF-Woskpace</div>
<div class="t" style="left:918.20px;top:422px;font-size:12px;line-height:12px;color:#ffffff;letter-spacing:-0.289px;-webkit-text-stroke:0.2px currentColor">Workspace</div>
<div class="t" style="left:1234.20px;top:422px;font-size:12px;line-height:12px;color:#ffffff;letter-spacing:-0.043px;-webkit-text-stroke:0.2px currentColor">North Europe</div>
<svg class="i" style="left:1549px;top:424.7px;width:16px;height:4px" viewBox="0 0 16 4"><circle cx="2" cy="2" r="1.45" fill="#2b90f2"/><circle cx="8" cy="2" r="1.45" fill="#2b90f2"/><circle cx="14" cy="2" r="1.45" fill="#2b90f2"/></svg>
<div class="b" style="left:271px;top:448px;width:16px;height:16px;border:1.2px solid #eeeceb;box-sizing:border-box;border-radius:2px"></div>
<svg class="i" style="left:294px;top:449px;width:16px;height:16px" viewBox="0 0 16 16"><ellipse cx="8" cy="12" rx="7.2" ry="3.2" fill="#5a9e2a"/><ellipse cx="8" cy="11.2" rx="7.2" ry="2.9" fill="#86c840"/><ellipse cx="8" cy="11.2" rx="3.2" ry="1" fill="#74b436"/><ellipse cx="8" cy="5.3" rx="7.2" ry="3.2" fill="#1f78d0"/><ellipse cx="8" cy="4.5" rx="7.2" ry="2.9" fill="#55aaf0"/><ellipse cx="8" cy="4.5" rx="3.2" ry="1" fill="#1a5fae"/></svg>
<div class="t" style="left:316.70px;top:451px;font-size:12px;line-height:12px;color:#3794f5;letter-spacing:0.035px;-webkit-text-stroke:0.2px currentColor">avdtf-1</div>
<div class="t" style="left:918.20px;top:451px;font-size:12px;line-height:12px;color:#ffffff;letter-spacing:-0.315px;-webkit-text-stroke:0.2px currentColor">Disk</div>
<div class="t" style="left:1234.20px;top:451px;font-size:12px;line-height:12px;color:#ffffff;letter-spacing:-0.043px;-webkit-text-stroke:0.2px currentColor">North Europe</div>
<svg class="i" style="left:1549px;top:453.6px;width:16px;height:4px" viewBox="0 0 16 4"><circle cx="2" cy="2" r="1.45" fill="#2b90f2"/><circle cx="8" cy="2" r="1.45" fill="#2b90f2"/><circle cx="14" cy="2" r="1.45" fill="#2b90f2"/></svg>
<div class="b" style="left:271px;top:477px;width:16px;height:16px;border:1.2px solid #eeeceb;box-sizing:border-box;border-radius:2px"></div>
<svg class="i" style="left:294px;top:478px;width:16px;height:16px" viewBox="0 0 16 16"><rect x="0.2" y="0.5" width="15.6" height="10.8" rx=".6" fill="#2f8fe5"/><rect x="0.2" y="0.5" width="15.6" height="10.8" rx=".6" fill="none" stroke="#5bb3f5" stroke-width=".5"/><path d="M8 2.6 L10.6 4 V7.2 L8 8.7 L5.4 7.2 V4 Z" fill="#9be8ff"/><path d="M8 5.6 L10.6 4 V7.2 L8 8.7 Z" fill="#50c8f0"/><rect x="6.8" y="11.3" width="2.4" height="2.6" fill="#a8a8a8"/><rect x="4.3" y="13.6" width="7.4" height="1.6" rx=".4" fill="#c8c8c8"/></svg>
<div class="t" style="left:316.70px;top:480px;font-size:12px;line-height:12px;color:#3794f5;letter-spacing:0.035px;-webkit-text-stroke:0.2px currentColor">avdtf-1</div>
<div class="t" style="left:918.20px;top:480px;font-size:12px;line-height:12px;color:#ffffff;letter-spacing:-0.114px;-webkit-text-stroke:0.2px currentColor">Virtual machine</div>
<div class="t" style="left:1234.20px;top:480px;font-size:12px;line-height:12px;color:#ffffff;letter-spacing:-0.043px;-webkit-text-stroke:0.2px currentColor">North Europe</div>
<svg class="i" style="left:1549px;top:482.6px;width:16px;height:4px" viewBox="0 0 16 4"><circle cx="2" cy="2" r="1.45" fill="#2b90f2"/><circle cx="8" cy="2" r="1.45" fill="#2b90f2"/><circle cx="14" cy="2" r="1.45" fill="#2b90f2"/></svg>
<div class="b" style="left:271px;top:506px;width:16px;height:16px;border:1.2px solid #eeeceb;box-sizing:border-box;border-radius:2px"></div>
<svg class="i" style="left:294px;top:507px;width:16px;height:16px" viewBox="0 0 16 16"><rect x="0" y="5" width="2" height="6" fill="#4a4a48"/><rect x="2" y="1" width="12.2" height="13.8" fill="#6cb83a"/><rect x="6.5" y="1.6" width="6.5" height="3.4" fill="#3f7d22"/><path d="M4 6 L7.3 4.6 L8.6 6.6 L5.4 8.3 Z" fill="#e8f2e0"/><rect x="4.8" y="9.5" width="1.2" height="4.3" fill="#3f7d22"/><rect x="7.6" y="8.5" width="1.2" height="5.3" fill="#bfe39c"/><rect x="10.6" y="9" width="1.6" height="4.8" fill="#d8efc4"/><rect x="14.2" y="2.2" width="1.8" height="4.6" fill="#e0a81a"/><rect x="14.2" y="8.4" width="1.8" height="5" fill="#e0a81a"/></svg>
<div class="t" style="left:316.70px;top:509px;font-size:12px;line-height:12px;color:#3794f5;letter-spacing:0.157px;-webkit-text-stroke:0.2px currentColor">avdtf-1-nic</div>
<div class="t" style="left:918.20px;top:509px;font-size:12px;line-height:12px;color:#ffffff;letter-spacing:-0.053px;-webkit-text-stroke:0.2px currentColor">Network Interface</div>
<div class="t" style="left:1234.20px;top:509px;font-size:12px;line-height:12px;color:#ffffff;letter-spacing:-0.043px;-webkit-text-stroke:0.2px currentColor">North Europe</div>
<svg class="i" style="left:1549px;top:511.5px;width:16px;height:4px" viewBox="0 0 16 4"><circle cx="2" cy="2" r="1.45" fill="#2b90f2"/><circle cx="8" cy="2" r="1.45" fill="#2b90f2"/><circle cx="14" cy="2" r="1.45" fill="#2b90f2"/></svg>
<div class="b" style="left:271px;top:535px;width:16px;height:16px;border:1.2px solid #eeeceb;box-sizing:border-box;border-radius:2px"></div>
<svg class="i" style="left:294px;top:536px;width:16px;height:16px" viewBox="0 0 16 16"><ellipse cx="8" cy="12" rx="7.2" ry="3.2" fill="#5a9e2a"/><ellipse cx="8" cy="11.2" rx="7.2" ry="2.9" fill="#86c840"/><ellipse cx="8" cy="11.2" rx="3.2" ry="1" fill="#74b436"/><ellipse cx="8" cy="5.3" rx="7.2" ry="3.2" fill="#1f78d0"/><ellipse cx="8" cy="4.5" rx="7.2" ry="2.9" fill="#55aaf0"/><ellipse cx="8" cy="4.5" rx="3.2" ry="1" fill="#1a5fae"/></svg>
<div class="t" style="left:316.70px;top:538px;font-size:12px;line-height:12px;color:#3794f5;letter-spacing:0.119px;-webkit-text-stroke:0.2px currentColor">avdtf-2</div>
<div class="t" style="left:918.20px;top:538px;font-size:12px;line-height:12px;color:#ffffff;letter-spacing:-0.315px;-webkit-text-stroke:0.2px currentColor">Disk</div>
<div class="t" style="left:1234.20px;top:538px;font-size:12px;line-height:12px;color:#ffffff;letter-spacing:-0.043px;-webkit-text-stroke:0.2px currentColor">North Europe</div>
<svg class="i" style="left:1549px;top:540.4px;width:16px;height:4px" viewBox="0 0 16 4"><circle cx="2" cy="2" r="1.45" fill="#2b90f2"/><circle cx="8" cy="2" r="1.45" fill="#2b90f2"/><circle cx="14" cy="2" r="1.45" fill="#2b90f2"/></svg>
<div class="b" style="left:271px;top:564px;width:16px;height:16px;border:1.2px solid #eeeceb;box-sizing:border-box;border-radius:2px"></div>
<svg class="i" style="left:294px;top:565px;width:16px;height:16px" viewBox="0 0 16 16"><rect x="0.2" y="0.5" width="15.6" height="10.8" rx=".6" fill="#2f8fe5"/><rect x="0.2" y="0.5" width="15.6" height="10.8" rx=".6" fill="none" stroke="#5bb3f5" stroke-width=".5"/><path d="M8 2.6 L10.6 4 V7.2 L8 8.7 L5.4 7.2 V4 Z" fill="#9be8ff"/><path d="M8 5.6 L10.6 4 V7.2 L8 8.7 Z" fill="#50c8f0"/><rect x="6.8" y="11.3" width="2.4" height="2.6" fill="#a8a8a8"/><rect x="4.3" y="13.6" width="7.4" height="1.6" rx=".4" fill="#c8c8c8"/></svg>
<div class="t" style="left:316.70px;top:567px;font-size:12px;line-height:12px;color:#3794f5;letter-spacing:0.119px;-webkit-text-stroke:0.2px currentColor">avdtf-2</div>
<div class="t" style="left:918.20px;top:567px;font-size:12px;line-height:12px;color:#ffffff;letter-spacing:-0.114px;-webkit-text-stroke:0.2px currentColor">Virtual machine</div>
<div class="t" style="left:1234.20px;top:567px;font-size:12px;line-height:12px;color:#ffffff;letter-spacing:-0.043px;-webkit-text-stroke:0.2px currentColor">North Europe</div>
<svg class="i" style="left:1549px;top:569.3px;width:16px;height:4px" viewBox="0 0 16 4"><circle cx="2" cy="2" r="1.45" fill="#2b90f2"/><circle cx="8" cy="2" r="1.45" fill="#2b90f2"/><circle cx="14" cy="2" r="1.45" fill="#2b90f2"/></svg>
<div class="b" style="left:271px;top:592px;width:16px;height:16px;border:1.2px solid #eeeceb;box-sizing:border-box;border-radius:2px"></div>
<svg class="i" style="left:294px;top:593px;width:16px;height:16px" viewBox="0 0 16 16"><rect x="0" y="5" width="2" height="6" fill="#4a4a48"/><rect x="2" y="1" width="12.2" height="13.8" fill="#6cb83a"/><rect x="6.5" y="1.6" width="6.5" height="3.4" fill="#3f7d22"/><path d="M4 6 L7.3 4.6 L8.6 6.6 L5.4 8.3 Z" fill="#e8f2e0"/><rect x="4.8" y="9.5" width="1.2" height="4.3" fill="#3f7d22"/><rect x="7.6" y="8.5" width="1.2" height="5.3" fill="#bfe39c"/><rect x="10.6" y="9" width="1.6" height="4.8" fill="#d8efc4"/><rect x="14.2" y="2.2" width="1.8" height="4.6" fill="#e0a81a"/><rect x="14.2" y="8.4" width="1.8" height="5" fill="#e0a81a"/></svg>
<div class="t" style="left:316.70px;top:596px;font-size:12px;line-height:12px;color:#3794f5;letter-spacing:0.137px;-webkit-text-stroke:0.2px currentColor">avdtf-2-nic</div>
<div class="t" style="left:918.20px;top:596px;font-size:12px;line-height:12px;color:#ffffff;letter-spacing:-0.053px;-webkit-text-stroke:0.2px currentColor">Network Interface</div>
<div class="t" style="left:1234.20px;top:596px;font-size:12px;line-height:12px;color:#ffffff;letter-spacing:-0.043px;-webkit-text-stroke:0.2px currentColor">North Europe</div>
<svg class="i" style="left:1549px;top:598.2px;width:16px;height:4px" viewBox="0 0 16 4"><circle cx="2" cy="2" r="1.45" fill="#2b90f2"/><circle cx="8" cy="2" r="1.45" fill="#2b90f2"/><circle cx="14" cy="2" r="1.45" fill="#2b90f2"/></svg>
<div class="b" style="left:271px;top:621px;width:16px;height:16px;border:1.2px solid #eeeceb;box-sizing:border-box;border-radius:2px"></div>
<svg class="i" style="left:294px;top:622px;width:16px;height:16px" viewBox="0 0 16 16"><circle cx="8" cy="8" r="7.8" fill="#0f66c0"/><rect x="4.6" y="4.6" width="1.8" height="1.8" fill="#fff"/><rect x="4.6" y="7.1" width="1.8" height="1.8" fill="#fff"/><rect x="4.6" y="9.6" width="1.8" height="1.8" fill="#fff"/><rect x="7.1" y="4.6" width="1.8" height="1.8" fill="#fff"/><rect x="7.1" y="7.1" width="1.8" height="1.8" fill="#fff"/><rect x="7.1" y="9.6" width="1.8" height="1.8" fill="#fff"/><rect x="9.6" y="4.6" width="1.8" height="1.8" fill="#fff"/><rect x="9.6" y="7.1" width="1.8" height="1.8" fill="#fff"/><rect x="9.6" y="9.6" width="1.8" height="1.8" fill="#fff"/></svg>
<div class="t" style="left:316.70px;top:625px;font-size:12px;line-height:12px;color:#3794f5;letter-spacing:0.144px;-webkit-text-stroke:0.2px currentColor">avdtf-dag</div>
<div class="t" style="left:918.20px;top:625px;font-size:12px;line-height:12px;color:#ffffff;letter-spacing:0.073px;-webkit-text-stroke:0.2px currentColor">Application group</div>
<div class="t" style="left:1234.20px;top:625px;font-size:12px;line-height:12px;color:#ffffff;letter-spacing:-0.043px;-webkit-text-stroke:0.2px currentColor">North Europe</div>
<svg class="i" style="left:1549px;top:627.2px;width:16px;height:4px" viewBox="0 0 16 4"><circle cx="2" cy="2" r="1.45" fill="#2b90f2"/><circle cx="8" cy="2" r="1.45" fill="#2b90f2"/><circle cx="14" cy="2" r="1.45" fill="#2b90f2"/></svg>
<div class="b" style="left:271px;top:650px;width:16px;height:16px;border:1.2px solid #eeeceb;box-sizing:border-box;border-radius:2px"></div>
<svg class="i" style="left:294px;top:651px;width:16px;height:16px" viewBox="0 0 16 16"><path d="M8 0.4 L14.6 2.6 V8.3 C14.6 12 11 14.3 8 15.6 C5 14.3 1.4 12 1.4 8.3 V2.6 Z" fill="#2f8fe5"/><path d="M8 0.4 L14.6 2.6 V8.3 L8 8.3 Z" fill="#64c4f7"/><path d="M1.4 8.3 H8 V15.6 C5 14.3 1.4 12 1.4 8.3 Z" fill="#64c4f7"/></svg>
<div class="t" style="left:316.70px;top:654px;font-size:12px;line-height:12px;color:#3794f5;letter-spacing:-0.227px;-webkit-text-stroke:0.2px currentColor">avdtf-NSG</div>
<div class="t" style="left:918.20px;top:654px;font-size:12px;line-height:12px;color:#ffffff;letter-spacing:-0.039px;-webkit-text-stroke:0.2px currentColor">Network security group</div>
<div class="t" style="left:1234.20px;top:654px;font-size:12px;line-height:12px;color:#ffffff;letter-spacing:-0.043px;-webkit-text-stroke:0.2px currentColor">North Europe</div>
<svg class="i" style="left:1549px;top:656.1px;width:16px;height:4px" viewBox="0 0 16 4"><circle cx="2" cy="2" r="1.45" fill="#2b90f2"/><circle cx="8" cy="2" r="1.45" fill="#2b90f2"/><circle cx="14" cy="2" r="1.45" fill="#2b90f2"/></svg>
<div class="b" style="left:271px;top:679px;width:16px;height:16px;border:1.2px solid #eeeceb;box-sizing:border-box;border-radius:2px"></div>
<svg class="i" style="left:294px;top:680px;width:16px;height:16px" viewBox="0 0 16 16"><rect x="0.5" y="0.5" width="15" height="15" fill="none" stroke="#2f6fb0" stroke-width=".8" stroke-dasharray="1.2 1.2"/><ellipse cx="6.5" cy="10" rx="5" ry="2.6" fill="#5ea82e"/><ellipse cx="6.5" cy="8.3" rx="5" ry="2.2" fill="#86cc45"/><ellipse cx="6.5" cy="5.4" rx="5" ry="2.6" fill="#2b8de0"/><ellipse cx="6.5" cy="4.2" rx="5" ry="2" fill="#5cb0f2"/><circle cx="11.8" cy="8.8" r="2.2" fill="#3aa0f0"/><rect x="11.1" y="9.5" width="1.4" height="5" fill="#3aa0f0"/></svg>
<div class="t" style="left:316.70px;top:682px;font-size:12px;line-height:12px;color:#3794f5;letter-spacing:-0.032px;-webkit-text-stroke:0.2px currentColor">encryptiondisk</div>
<div class="t" style="left:918.20px;top:682px;font-size:12px;line-height:12px;color:#ffffff;letter-spacing:-0.240px;-webkit-text-stroke:0.2px currentColor">Disk Encryption Set</div>
<div class="t" style="left:1234.20px;top:682px;font-size:12px;line-height:12px;color:#ffffff;letter-spacing:-0.043px;-webkit-text-stroke:0.2px currentColor">North Europe</div>
<svg class="i" style="left:1549px;top:685.0px;width:16px;height:4px" viewBox="0 0 16 4"><circle cx="2" cy="2" r="1.45" fill="#2b90f2"/><circle cx="8" cy="2" r="1.45" fill="#2b90f2"/><circle cx="14" cy="2" r="1.45" fill="#2b90f2"/></svg>
<div class="b" style="left:271px;top:708px;width:16px;height:16px;border:1.2px solid #eeeceb;box-sizing:border-box;border-radius:2px"></div>
<svg class="i" style="left:294px;top:709px;width:16px;height:16px" viewBox="0 0 16 16"><circle cx="8" cy="8" r="7.6" fill="#f4f4f4"/><circle cx="8" cy="8" r="7.6" fill="none" stroke="#2f8fe5" stroke-width=".9"/><circle cx="8" cy="5.6" r="3.7" fill="#fbb61b"/><path d="M6.7 7 H9.3 V14.3 H6.7 Z" fill="#f0990f"/><rect x="9.3" y="10.5" width="1.3" height="1.2" fill="#f0990f"/></svg>
<div class="t" style="left:316.70px;top:711px;font-size:12px;line-height:12px;color:#3794f5;letter-spacing:-0.121px;-webkit-text-stroke:0.2px currentColor">kv-efolfasgdwasj</div>
<div class="t" style="left:918.20px;top:711px;font-size:12px;line-height:12px;color:#ffffff;letter-spacing:-0.207px;-webkit-text-stroke:0.2px currentColor">Key vault</div>
<div class="t" style="left:1234.20px;top:711px;font-size:12px;line-height:12px;color:#ffffff;letter-spacing:-0.043px;-webkit-text-stroke:0.2px currentColor">North Europe</div>
<svg class="i" style="left:1549px;top:713.9px;width:16px;height:4px" viewBox="0 0 16 4"><circle cx="2" cy="2" r="1.45" fill="#2b90f2"/><circle cx="8" cy="2" r="1.45" fill="#2b90f2"/><circle cx="14" cy="2" r="1.45" fill="#2b90f2"/></svg>
<div class="b" style="left:271px;top:737px;width:16px;height:16px;border:1.2px solid #eeeceb;box-sizing:border-box;border-radius:2px"></div>
<svg class="i" style="left:294px;top:738px;width:16px;height:16px" viewBox="0 0 16 16"><path d="M4.5 3.2 L0.9 8 L4.5 12.8 M11.5 3.2 L15.1 8 L11.5 12.8" fill="none" stroke="#2ec4ef" stroke-width="1.6"/><circle cx="5.3" cy="8" r="1" fill="#7fbf3a"/><circle cx="8" cy="8" r="1" fill="#7fbf3a"/><circle cx="10.7" cy="8" r="1" fill="#7fbf3a"/></svg>
<div class="t" style="left:316.70px;top:740px;font-size:12px;line-height:12px;color:#3794f5;letter-spacing:-0.062px;-webkit-text-stroke:0.2px currentColor">Vnet</div>
<div class="t" style="left:918.20px;top:740px;font-size:12px;line-height:12px;color:#ffffff;letter-spacing:0.039px;-webkit-text-stroke:0.2px currentColor">Virtual network</div>
<div class="t" style="left:1234.20px;top:740px;font-size:12px;line-height:12px;color:#ffffff;letter-spacing:-0.043px;-webkit-text-stroke:0.2px currentColor">North Europe</div>
<svg class="i" style="left:1549px;top:742.8px;width:16px;height:4px" viewBox="0 0 16 4"><circle cx="2" cy="2" r="1.45" fill="#2b90f2"/><circle cx="8" cy="2" r="1.45" fill="#2b90f2"/><circle cx="14" cy="2" r="1.45" fill="#2b90f2"/></svg>
<svg class="i" style="left:44px;top:711px;width:13px;height:20px" viewBox="0 0 13 20"><path d="M0.6 0.6 V16.6 L4.3 13.1 L7 18.8 L9.4 17.8 L6.8 12.2 L11.8 12.2 Z" fill="#ffffff" stroke="#000" stroke-width="1.1" stroke-linejoin="round"/></svg>
</body></html>
